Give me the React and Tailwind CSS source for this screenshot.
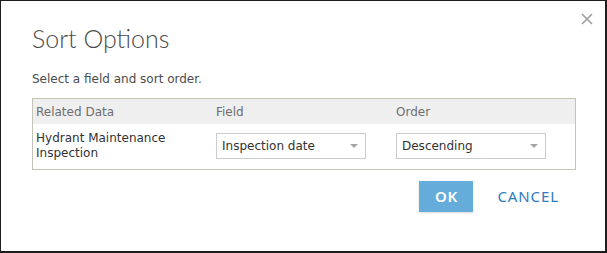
import React from "react";

const verdana = { fontFamily: "Verdana, 'DejaVu Sans', sans-serif" };

function Select({ value }) {
  return (
    <div className="flex h-[26px] w-[150px] items-center justify-between border border-[#cccccc] bg-white pl-[5px] pr-[7px] text-[12px] text-[#323232]">
      <span>{value}</span>
      <svg width="8" height="4" viewBox="0 0 8 4">
        <path d="M0 0h8L4 4z" fill="#a5a5a5" />
      </svg>
    </div>
  );
}

export default function App() {
  return (
    <div className="h-[253px] w-[607px] bg-[#1c1d1c] pl-[1px] pt-[1px]">
      <div
        className="relative h-[250px] w-[604px] bg-white pl-[31px] pr-[29px]"
        style={verdana}
      >
        <button className="absolute right-[10px] top-[10px] p-[2px]">
          <svg width="12" height="12" viewBox="0 0 12 12">
            <path d="M1 1l10 10M11 1L1 11" stroke="#9e9e9e" strokeWidth="1.6" />
          </svg>
        </button>

        <h1
          className="pt-[22px] text-[25px] font-light leading-[30px] text-[#4c4c4c]"
          style={{ fontFamily: "Lato, 'Noto Sans', sans-serif" }}
        >
          Sort Options
        </h1>

        <p className="mt-[18px] text-[12px] leading-[16px] text-[#4c4c4c]">
          Select a field and sort order.
        </p>

        <div className="mt-[11px] border border-[#c3c3b6] text-[12px]">
          <div className="grid h-[25px] grid-cols-[180px_180px_1fr] items-center bg-[#efefef] pl-[3px] text-[#6e6e6e]">
            <span>Related Data</span>
            <span>Field</span>
            <span>Order</span>
          </div>
          <div className="grid h-[45px] grid-cols-[180px_180px_1fr] items-center pb-[2px] pl-[3px] text-[#323232]">
            <span className="leading-[15px]">
              Hydrant Maintenance
              <br />
              Inspection
            </span>
            <Select value="Inspection date" />
            <Select value="Descending" />
          </div>
        </div>

        <div className="mt-[11px] flex items-center justify-end gap-[24px] pr-[17px]">
          <button
            className="h-[31px] w-[54px] bg-[#65acda] text-[15px] font-semibold tracking-[0.05em] text-white shadow-[0_1px_2px_rgba(0,0,0,0.15)]"
            style={{ fontFamily: "'Noto Sans', 'Open Sans', sans-serif" }}
          >
            OK
          </button>
          <button
            className="text-[15px] tracking-[0.06em] text-[#2e7bbf]"
            style={{ fontFamily: "'Noto Sans', 'Open Sans', sans-serif" }}
          >
            CANCEL
          </button>
        </div>
      </div>
    </div>
  );
}
